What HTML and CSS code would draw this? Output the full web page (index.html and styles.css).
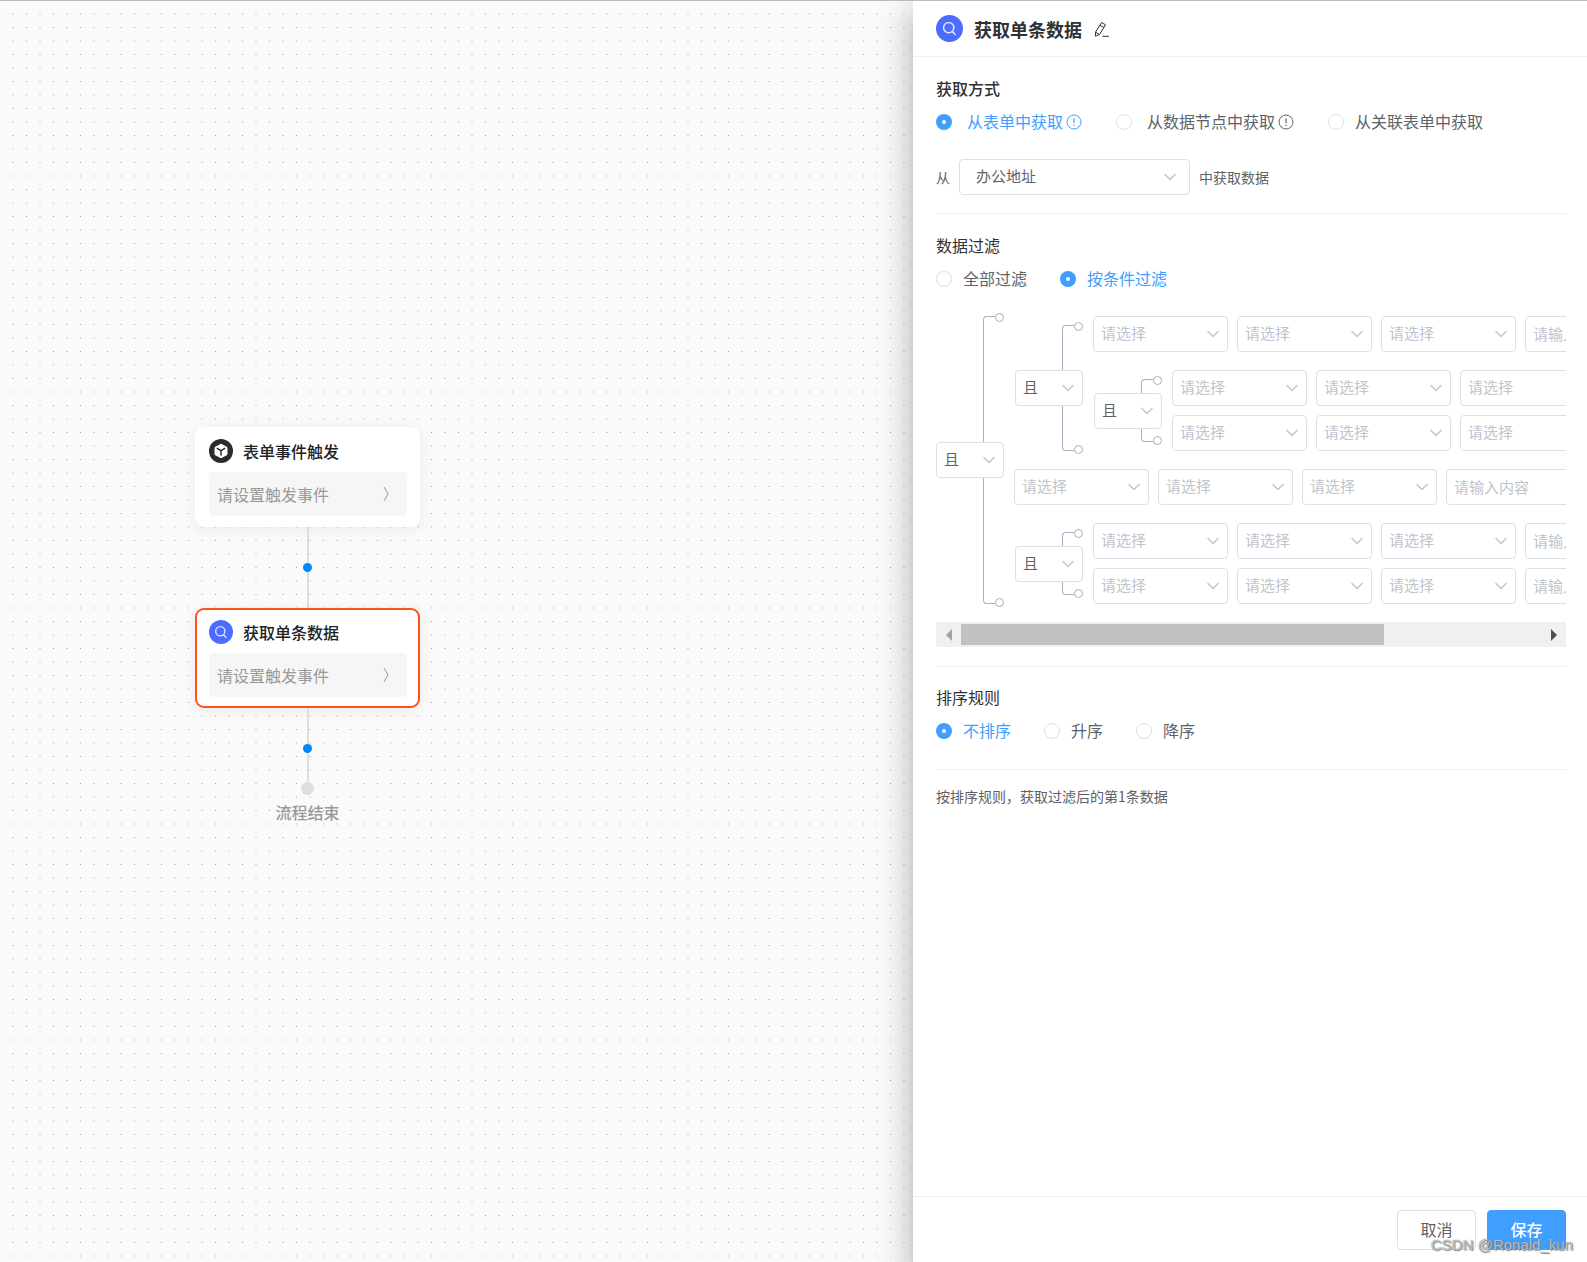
FILE: index.html
```html
<!DOCTYPE html>
<html lang="zh-CN">
<head>
<meta charset="utf-8">
<meta name="viewport" content="width=device-width, initial-scale=1">
<title>获取单条数据</title>
<link rel="stylesheet" href="styles.css">
</head>
<body>
<svg class="defs" aria-hidden="true">
  <symbol id="i-search" viewBox="0 0 24 24">
    <circle cx="12" cy="12" r="12" fill="#4c6bff"/>
    <g fill="none" stroke="#dfe5ff" stroke-width="1.4" stroke-linecap="round"><circle cx="11.3" cy="11.2" r="4.600"/><path d="M14.6 14.800 17 17.4"/></g>
  </symbol>
  <symbol id="i-info" viewBox="0 0 16 16">
    <circle cx="8" cy="8" r="7" fill="none" stroke="currentColor"/>
    <path d="M8 4.2v5M8 10.8v1.2" stroke="currentColor" stroke-width="1.2"/>
  </symbol>
</svg>
<div class="app">
  <main class="canvas">
    <svg class="grid" aria-hidden="true">
      <defs><pattern id="dots" width="27" height="27" patternUnits="userSpaceOnUse">
        <rect x="12" y="12" width="2" height="2" fill="#e6e6e8"/>
        <rect x="26" y="12" width="1" height="2" fill="#cfd0d8"/>
        <rect x="12" y="26" width="2" height="1" fill="#cdcdd0"/>
        <rect x="26" y="26" width="1" height="1" fill="#9c9da8"/>
      </pattern></defs>
      <rect width="100%" height="100%" fill="url(#dots)"/>
    </svg>
    <div class="flow">
      <article class="node">
        <h2 class="node-title">
          <svg class="node-icon" viewBox="0 0 24 24" aria-hidden="true"><circle cx="12" cy="12" r="12" fill="#2b2b2b"/><path d="M12 5.2 18 8.4v7.2L12 18.8 6 15.600V8.400z" fill="#fff" stroke="#fff" stroke-linejoin="round"/><path d="M7.800 9.200 12 11.600l4.200-2.400M12 11.600v5" fill="none" stroke="#2b2b2b" stroke-width="1.500"/></svg>
          表单事件触发</h2>
        <button class="node-body" type="button">请设置触发事件<svg class="arrow" viewBox="0 0 8 16" aria-hidden="true"><path d="M2 1 6 8 2 15"/></svg></button>
      </article>
      <div class="link"><span class="plus"></span></div>
      <article class="node selected">
        <h2 class="node-title"><svg class="node-icon" aria-hidden="true"><use href="#i-search"/></svg>获取单条数据</h2>
        <button class="node-body" type="button">请设置触发事件<svg class="arrow" viewBox="0 0 8 16" aria-hidden="true"><path d="M2 1 6 8 2 15"/></svg></button>
      </article>
      <div class="link last"><span class="plus"></span></div>
      <span class="end-dot"></span>
      <p class="end-text">流程结束</p>
    </div>
  </main>

  <aside class="drawer">
    <header class="drawer-head">
      <svg class="head-icon" aria-hidden="true"><use href="#i-search"/></svg>
      <h1>获取单条数据</h1>
      <button class="edit" type="button" aria-label="编辑名称"><svg viewBox="0 0 16 16" aria-hidden="true"><path d="M7.500 1.500 11.500 3.800 5.500 13.500 1.500 15.200 1.500 11.200zM6 4.200l4 2.300M1.500 11.200l4 2.300M8.500 15.300H15"/></svg></button>
    </header>

    <form class="drawer-body" id="node-form">
      <section class="section">
        <h3 class="strong">获取方式</h3>
        <div class="radios source-radios">
          <label class="radio wide"><input type="radio" name="source" checked><span>从表单中获取</span><svg class="info" aria-hidden="true"><use href="#i-info"/></svg></label>
          <label class="radio wide"><input type="radio" name="source"><span>从数据节点中获取</span><svg class="info" aria-hidden="true"><use href="#i-info"/></svg></label>
          <label class="radio"><input type="radio" name="source"><span>从关联表单中获取</span></label>
        </div>
        <div class="source">
          <label for="form-select">从</label>
          <select class="field form-select" id="form-select"><option>办公地址</option></select>
          <span>中获取数据</span>
        </div>
      </section>

      <section class="section filter">
        <h3>数据过滤</h3>
        <div class="radios">
          <label class="radio"><input type="radio" name="filter"><span>全部过滤</span></label>
          <label class="radio"><input type="radio" name="filter" checked><span>按条件过滤</span></label>
        </div>
        <div class="viewport">
          <div class="group">
            <div class="relation"><i class="bracket top"></i><select class="field logic" aria-label="条件关系"><option>且</option><option>或</option></select><i class="bracket bottom"></i></div>
            <div class="children">
              <div class="group">
                <div class="relation row-first"><i class="bracket top"></i><select class="field logic" aria-label="条件关系"><option>且</option><option>或</option></select><i class="bracket bottom"></i></div>
                <div class="children">
                  <div class="cond">
                    <select class="field empty" aria-label="字段"><option>请选择</option></select>
                    <select class="field empty" aria-label="运算符"><option>请选择</option></select>
                    <select class="field empty" aria-label="值类型"><option>请选择</option></select>
                    <input class="field" type="text" aria-label="值" placeholder="请输入内容">
                  </div>
                  <div class="group">
                    <div class="relation row-first row-last"><i class="bracket top"></i><select class="field logic" aria-label="条件关系"><option>且</option><option>或</option></select><i class="bracket bottom"></i></div>
                    <div class="children tight">
                      <div class="cond">
                        <select class="field empty" aria-label="字段"><option>请选择</option></select>
                        <select class="field empty" aria-label="运算符"><option>请选择</option></select>
                        <select class="field empty" aria-label="值类型"><option>请选择</option></select>
                        <input class="field" type="text" aria-label="值" placeholder="请输入内容">
                      </div>
                      <div class="cond">
                        <select class="field empty" aria-label="字段"><option>请选择</option></select>
                        <select class="field empty" aria-label="运算符"><option>请选择</option></select>
                        <select class="field empty" aria-label="值类型"><option>请选择</option></select>
                        <input class="field" type="text" aria-label="值" placeholder="请输入内容">
                      </div>
                    </div>
                  </div>
                </div>
              </div>
              <div class="cond">
                <select class="field empty" aria-label="字段"><option>请选择</option></select>
                <select class="field empty" aria-label="运算符"><option>请选择</option></select>
                <select class="field empty" aria-label="值类型"><option>请选择</option></select>
                <input class="field" type="text" aria-label="值" placeholder="请输入内容">
              </div>
              <div class="group">
                <div class="relation row-first row-last"><i class="bracket top"></i><select class="field logic" aria-label="条件关系"><option>且</option><option>或</option></select><i class="bracket bottom"></i></div>
                <div class="children tight">
                  <div class="cond">
                    <select class="field empty" aria-label="字段"><option>请选择</option></select>
                    <select class="field empty" aria-label="运算符"><option>请选择</option></select>
                    <select class="field empty" aria-label="值类型"><option>请选择</option></select>
                    <input class="field" type="text" aria-label="值" placeholder="请输入内容">
                  </div>
                  <div class="cond">
                    <select class="field empty" aria-label="字段"><option>请选择</option></select>
                    <select class="field empty" aria-label="运算符"><option>请选择</option></select>
                    <select class="field empty" aria-label="值类型"><option>请选择</option></select>
                    <input class="field" type="text" aria-label="值" placeholder="请输入内容">
                  </div>
                </div>
              </div>
            </div>
          </div>
        </div>
        <div class="scrollbar">
          <button class="scroll-btn" type="button" aria-label="向左滚动" disabled><svg viewBox="0 0 6 12" aria-hidden="true"><path d="M6 0v12L0 6z"/></svg></button>
          <div class="track"><div class="thumb"></div></div>
          <button class="scroll-btn" type="button" aria-label="向右滚动"><svg viewBox="0 0 6 12" aria-hidden="true"><path d="M0 0v12L6 6z"/></svg></button>
        </div>
      </section>

      <section class="section sort">
        <h3>排序规则</h3>
        <div class="radios">
          <label class="radio"><input type="radio" name="sort" checked><span>不排序</span></label>
          <label class="radio"><input type="radio" name="sort"><span>升序</span></label>
          <label class="radio"><input type="radio" name="sort"><span>降序</span></label>
        </div>
      </section>
      <p class="summary">按排序规则，获取过滤后的第1条数据</p>
    </form>

    <footer class="drawer-foot">
      <button class="btn" type="button">取消</button>
      <button class="btn primary" type="submit" form="node-form">保存</button>
    </footer>
  </aside>
  <span class="watermark">CSDN @Ronald_kun</span>
</div>
</body>
</html>
```
FILE: styles.css
```css
* { box-sizing: border-box; }

body, h1, h2, h3, p { margin: 0; }

body {
  font: 16px/24px "Noto Sans CJK SC", sans-serif;
  color: #606266;
}

button, select, input { font: inherit; color: inherit; }

.defs { position: absolute; width: 0; height: 0; }

.app {
  position: relative;
  display: flex;
  min-height: 100vh;
  border-top: 1px solid #bbb;
  overflow: hidden;
}

/* canvas */
.canvas {
  position: relative;
  flex: 1;
  min-width: 0;
  padding: 426px 0 0 195px;
  background: #fafafa;
}

.grid { position: absolute; inset: 0; width: 100%; height: 100%; }

.flow {
  position: relative;
  display: flex;
  flex-direction: column;
  align-items: center;
  width: 225px;
}

.node {
  width: 100%;
  padding: 12px 13px 11px 14px;
  border-radius: 9px;
  background: #fff;
  box-shadow: 0 2px 14px rgba(0, 0, 0, .07);
}

.node.selected {
  padding: 10px 11px 9px 12px;
  border: 2px solid #ff5219;
}

.node-title {
  display: flex;
  align-items: center;
  gap: 10px;
  margin-bottom: 9px;
  font-size: 16px;
  font-weight: 500;
  color: #222;
}

.node-icon { width: 24px; height: 24px; }

.node-body {
  display: flex;
  align-items: center;
  justify-content: space-between;
  width: 100%;
  height: 44px;
  padding: 0 17px 0 8px;
  border: 0;
  border-radius: 4px;
  background: #f6f6f6;
  color: #999;
}

.arrow { width: 8px; height: 16px; fill: none; stroke: #999; }

.link {
  display: flex;
  align-items: center;
  justify-content: center;
  width: 2px;
  height: 81px;
  background: #dedede;
}

.link.last { margin-bottom: -7px; }

.plus { flex: none; width: 9px; height: 9px; border-radius: 50%; background: #0089ff; }

.end-dot { width: 13px; height: 13px; border-radius: 50%; background: #dedede; }

.end-text { margin-top: 5px; font-weight: 500; color: #999; }

/* drawer */
.drawer {
  position: relative;
  display: flex;
  flex-direction: column;
  flex: none;
  width: 674px;
  max-width: 100%;
  background: #fff;
  box-shadow: 0 9px 11px -6px rgba(0, 0, 0, .2), 0 18px 27px 2px rgba(0, 0, 0, .14), 0 7px 34px 6px rgba(0, 0, 0, .12);
}

.drawer-head {
  display: flex;
  align-items: center;
  height: 56px;
  padding: 0 23px;
  border-bottom: 1px solid #f0f0f0;
}

.head-icon { width: 27px; height: 27px; }

h1 { margin: 0 12px 0 11px; font-size: 18px; font-weight: 700; color: #303133; }

.edit { padding: 0; border: 0; background: none; color: #333; }
.edit svg { display: block; width: 16px; height: 16px; fill: none; stroke: currentColor; stroke-linejoin: round; }

.drawer-body { flex: 1; padding: 0 21px 0 23px; }

.section { padding: 19px 0 18px; border-bottom: 1px solid #f0f0f0; }
.section.filter { padding-bottom: 19px; }
.section.sort { padding: 18px 0 26px; }

h3 { margin-bottom: 10px; font-size: 16px; font-weight: 400; color: #303133; }
h3.strong { font-weight: 500; }

.radios { display: flex; align-items: center; gap: 33px; }
.source-radios { gap: 34px; }

.radio { display: flex; align-items: center; gap: 11px; }
.radio.wide { gap: 15px; }
.radio span { padding-bottom: 2px; line-height: 22px; }

.radio input {
  appearance: none;
  width: 16px;
  height: 16px;
  margin: 0;
  border: 1px solid #dcdfe6;
  border-radius: 50%;
  background: #fff;
}

.radio input:checked { border: 6px solid #409eff; }
.radio input:checked ~ * { color: #409eff; }

.info { width: 16px; height: 16px; margin-left: -12px; }

.source {
  display: flex;
  align-items: center;
  gap: 9px;
  margin-top: 25px;
  font-size: 14px;
}

.field {
  appearance: none;
  display: block;
  width: 135px;
  height: 36px;
  padding: 0 8px 2px 7px;
  border: 1px solid #dcdfe6;
  border-radius: 4px;
  background: #fff;
  font-size: 15px;
}

select.field {
  background: #fff url("data:image/svg+xml,%3Csvg xmlns='http://www.w3.org/2000/svg' width='12' height='8'%3E%3Cpath d='M.5 1 6 6.500 11.500 1' fill='none' stroke='%23c0c4cc' stroke-width='1.400'/%3E%3C/svg%3E") no-repeat right 8px center;
}

.field.form-select { width: 231px; padding: 0 16px 2px; background-position: right 13px center; }
.field.empty { color: #c0c4cc; }
.field::placeholder { color: #c0c4cc; opacity: 1; }

/* condition tree */
.viewport { padding: 25px 0 18px; overflow: hidden; }
.viewport > .group { margin-left: -1px; }

.group { display: flex; width: max-content; }

.relation { display: flex; flex-direction: column; width: 79px; }
.relation.row-first { padding-top: 9px; }
.relation.row-last { padding-bottom: 9px; }

.bracket {
  position: relative;
  flex: 1;
  width: 14px;
  margin-left: 48px;
  border: 0 solid #a5b1c0;
  border-left-width: 1px;
}

.bracket.top { border-top-width: 1px; border-top-left-radius: 4px; }
.bracket.bottom { border-bottom-width: 1px; border-bottom-left-radius: 4px; }

.bracket::after {
  content: "";
  position: absolute;
  left: 11px;
  width: 7px;
  height: 7px;
  border: 1px solid #a5b1c0;
  border-radius: 50%;
  background: #fff;
}

.bracket.top::after { top: -4px; }
.bracket.bottom::after { bottom: -4px; }

.field.logic { width: 68px; margin-left: 1px; }

.children { display: flex; flex-direction: column; gap: 18px; }
.children.tight { gap: 9px; }

.cond { display: flex; gap: 9px; }

.scrollbar { display: flex; height: 25px; background: #f0f0f0; }

.scroll-btn {
  display: flex;
  align-items: center;
  justify-content: center;
  width: 25px;
  padding: 0;
  border: 0;
  background: none;
}

.scroll-btn svg { width: 6px; height: 12px; fill: #505050; }
.scroll-btn:disabled svg { fill: #a3a3a3; }

.track { flex: 1; padding: 2px 0; }
.thumb { width: 73%; height: 100%; background: #c1c1c1; }

.summary { padding-top: 14px; font-size: 14px; }

.drawer-foot {
  display: flex;
  justify-content: flex-end;
  gap: 11px;
  padding: 13px 21px 12px;
  border-top: 1px solid #f0f0f0;
}

.btn {
  width: 79px;
  height: 40px;
  padding: 0 0 3px;
  border: 1px solid #dcdfe6;
  border-radius: 4px;
  background: #fff;
}

.btn.primary { border-color: #409eff; background: #409eff; color: #fff; font-weight: 500; }

.watermark {
  position: absolute;
  right: 14px;
  bottom: 5px;
  font: 15px/24px "Liberation Sans", sans-serif;
  color: rgba(255, 255, 255, .6);
  text-shadow: 0 0 1px #555, 1px 1px 1px #888;
}
```
